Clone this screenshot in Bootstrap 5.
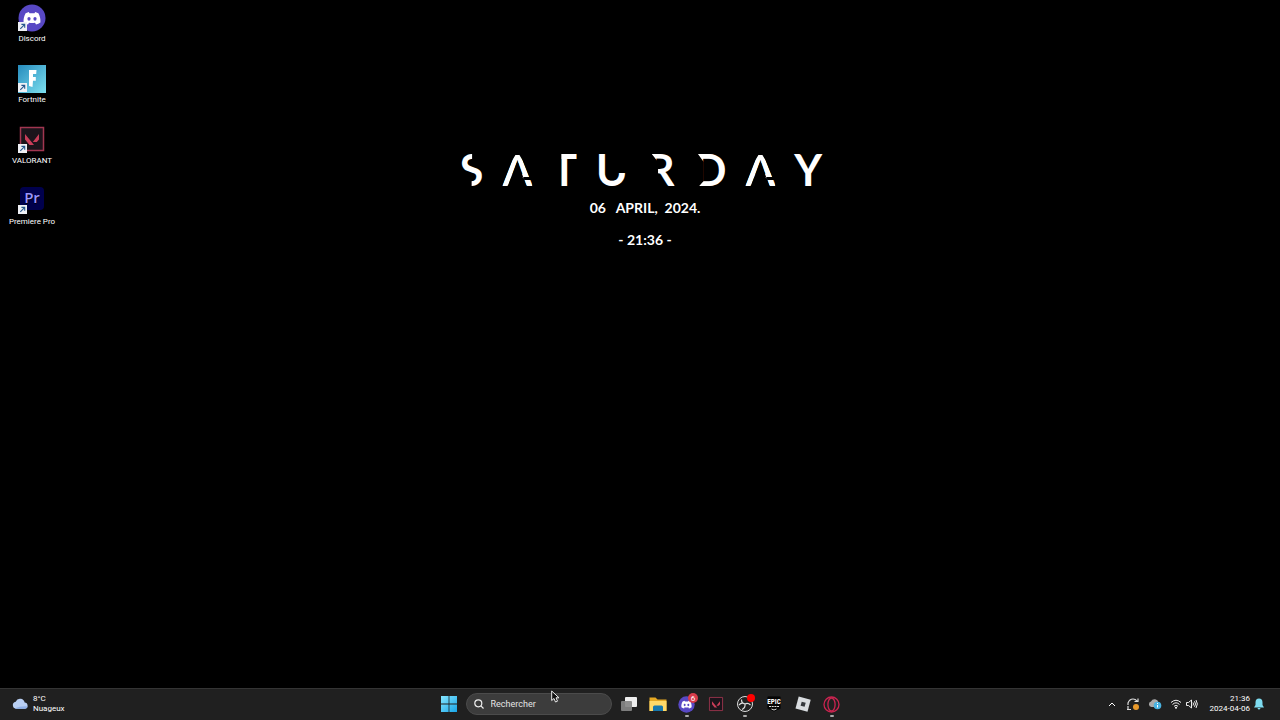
<!DOCTYPE html>
<html lang="fr">
<head>
<meta charset="utf-8">
<meta name="viewport" content="width=device-width, initial-scale=1">
<title>Bureau</title>
<link href="https://cdn.jsdelivr.net/npm/bootstrap@5.3.0/dist/css/bootstrap.min.css" rel="stylesheet">
<style>
  body { background: #000; color: #fff; font-family: Roboto, "Noto Sans", sans-serif; font-size: 8px; line-height: 10px; }
  button { background: none; border: 0; padding: 0; color: inherit; font: inherit; }
  svg { display: block; }
  .shortcuts { width: 64px; padding-top: 4px; }
  .shortcut { height: 61px; width: 64px; text-shadow: 0 1px 1px #000; }
  .shortcut svg { margin-bottom: 2px; }
  .clock { padding: 148px 0 0 10px; margin-right: 64px; font-family: Lato, sans-serif; font-weight: 700; font-size: 14px; line-height: 32px; }
  .clock h1 { font-size: 43px; line-height: 44px; font-weight: 700; gap: 19px; padding-right: 8px; }
  .clock p { white-space: pre; }
  /* stencil cuts in the letters of the day name */
  .cut-s { clip-path: polygon(0 0, 52% 0, 52% 18px, 100% 18px, 100% 100%, 50% 100%, 50% 28px, 0 28px); }
  .cut-a { clip-path: polygon(0 37px, 10px 12px, 13px 7px, 17px 7px, 20px 12px, 27px 29px, 20px 29px, 22px 32px, 100% 32px, 100% 100%, 26px 100%, 15px 13px, 3px 100%, 0 100%); }
  .cut-t { clip-path: polygon(39% 0, 100% 0, 100% 100%, 39% 100%); }
  .cut-u { clip-path: polygon(0 0, 50% 0, 50% 25px, 100% 25px, 100% 100%, 0 100%); }
  .cut-r { clip-path: polygon(0 0, 100% 0, 100% 100%, 11px 100%, 11px 14px); }
  .cut-d { clip-path: polygon(0 0, 100% 0, 100% 100%, 0 100%, 10px 33px, 10px 14px); }
  .taskbar { background: #202020; border-top: 1px solid #343434; height: 32px; padding-bottom: 1px; }
  .side { flex: 1 1 0; }
  .apps { gap: 11px; }
  .app { width: 18px; height: 30px; position: relative; display: flex; align-items: center; justify-content: center; }
  .running::after { content: ""; position: absolute; bottom: 2px; left: 7px; width: 4px; height: 2px; border-radius: 1px; background: #aaa; }
  .search { width: 146px; height: 22px; border-radius: 11px; background: #3c3c3c; border: 1px solid #4b4b4b; padding: 0 7px; gap: 7px; }
  .search input { background: none; border: 0; outline: 0; padding: 0; min-width: 0; width: 100%; font-size: 9px; color: #fff; }
  .search input::placeholder { color: #e4e4e4; opacity: 1; }
  .pointer { position: absolute; left: 551px; top: 690px; pointer-events: none; }
</style>
</head>
<body>
<svg width="0" height="0" class="position-absolute" aria-hidden="true">
  <defs>
    <symbol id="discord" viewBox="0 0 28 28">
      <circle cx="14" cy="14" r="13.5" fill="#5848c4"/>
      <path fill="#fff" d="M10.8 8 7.6 9.2C6 12 5.3 15 5.6 18.4q2 1.6 4.4 2.1l1-1.8q3 .8 6 0l1 1.8q2.4-.5 4.4-2.1c.3-3.4-.4-6.4-2-9.2L17.2 8l-.7 1.2h-5z"/>
      <ellipse cx="11" cy="14.8" rx="1.6" ry="1.9" fill="#5848c4"/><ellipse cx="17" cy="14.8" rx="1.6" ry="1.9" fill="#5848c4"/>
    </symbol>
    <symbol id="valorant" viewBox="0 0 28 28">
      <path fill="#1b141b" stroke="#a13650" stroke-width="1.5" d="M2.5 2.5h23v23h-23z"/>
      <path fill="#c93d59" d="m7 9 9 11h-4.500L7 14.500zM21 9v5.500L18.800 17h-4z"/>
    </symbol>
    <symbol id="arrow" viewBox="0 0 10 10">
      <path fill="#eef0f5" d="M0 0h9v9H0z"/><path fill="none" stroke="#26578c" stroke-width="1.1" d="M2.300 6.800 6.500 2.600M3.400 2.400h3.300v3.300"/>
    </symbol>
  </defs>
</svg>

<div class="d-flex flex-column min-vh-100">
  <main class="flex-grow-1 d-flex">
    <nav class="shortcuts d-flex flex-column" aria-label="Bureau">
      <button class="shortcut d-flex flex-column align-items-center">
        <svg width="28" height="28"><use href="#discord" width="28" height="28"/><use href="#arrow" y="18" width="10" height="10"/></svg>
        <span>Discord</span>
      </button>
      <button class="shortcut d-flex flex-column align-items-center">
        <svg width="28" height="28" viewBox="0 0 28 28"><defs><linearGradient id="sky" x2="1" y2="1"><stop stop-color="#268bbd"/><stop offset="1" stop-color="#7de0ef"/></linearGradient></defs><path fill="url(#sky)" d="M0 0h28v28H0z"/><path fill="#fff" d="M11 5h7.500l-.3 4H15v3h2.800v3.800H15L14.500 22 11 21z"/><use href="#arrow" y="18" width="10" height="10"/></svg>
        <span>Fortnite</span>
      </button>
      <button class="shortcut d-flex flex-column align-items-center">
        <svg width="28" height="28"><use href="#valorant" y="-1" width="28" height="28"/><use href="#arrow" y="18" width="10" height="10"/></svg>
        <span>VALORANT</span>
      </button>
      <button class="shortcut d-flex flex-column align-items-center">
        <svg width="28" height="28" viewBox="0 0 28 28"><rect x="2" y="0" width="24" height="23" rx="4" fill="#00004c"/><text x="14" y="16" text-anchor="middle" font-family="Open Sans, sans-serif" font-weight="600" font-size="15" fill="#9a94ff">Pr</text><use href="#arrow" y="18" width="10" height="10"/></svg>
        <span>Premiere Pro</span>
      </button>
    </nav>
    <section class="clock flex-grow-1 text-center">
      <h1 class="d-flex justify-content-center mb-0"><span class="cut-s">S</span><span class="cut-a">A</span><span class="cut-t">T</span><span class="cut-u">U</span><span class="cut-r">R</span><span class="cut-d">D</span><span class="cut-a">A</span><span>Y</span></h1>
      <p class="mb-0">06   APRIL,  2024.</p>
      <p class="mb-0">- 21:36 -</p>
    </section>
  </main>

  <footer class="taskbar d-flex align-items-center">
    <div class="side d-flex">
      <button class="d-flex align-items-center text-start gap-1 ms-2 ps-1">
        <svg width="17" height="13" viewBox="0 0 18 13"><path fill="#b9cff3" d="M4.300 11a3.800 3.800 0 0 1-.4-7.500 5 5 0 0 1 9.500 1A3.300 3.300 0 0 1 14 11z"/><path fill="#8fafe6" d="M3 10.500q6-2.500 13.500-2-.7 2.500-3 2.500H4z"/></svg>
        <span>8°C<br>Nuageux</span>
      </button>
    </div>
    <div class="d-flex align-items-center gap-2">
      <button class="app" aria-label="Démarrer"><svg width="16" height="16" viewBox="0 0 16 16"><defs><linearGradient id="win" x2="1" y2="1"><stop stop-color="#86e6ff"/><stop offset="1" stop-color="#18a5e8"/></linearGradient></defs><path fill="url(#win)" d="M0 0h7.600v7.600H0zM8.400 0H16v7.600H8.400zM0 8.400h7.600V16H0zM8.400 8.400H16V16H8.400z"/></svg></button>
      <label class="search d-flex align-items-center">
        <svg class="flex-shrink-0" width="10" height="10" viewBox="0 0 10 10" fill="none" stroke="#eee" stroke-width="1.2"><circle cx="4.3" cy="4.3" r="3.5"/><path d="m6.900 6.900 2.600 2.600"/></svg>
        <input type="text" placeholder="Rechercher" aria-label="Rechercher">
      </label>
      <div class="apps d-flex align-items-center">
      <button class="app" aria-label="Vue des tâches"><svg class="flex-shrink-0" width="18" height="16" viewBox="0 0 18 16"><rect x="5" y="1" width="12" height="10" rx="1" fill="#eee"/><rect x="1" y="5" width="11" height="10" rx="1" fill="#858585" opacity=".92"/></svg></button>
      <button class="app" aria-label="Explorateur"><svg width="18" height="16" viewBox="0 0 18 16"><path fill="#e5a823" d="M.5 1.500h6l2 2h9V15H.5z"/><path fill="#ffd969" d="M.5 5h17v10H.5z"/><path fill="#1878ad" d="M4 15v-4q0-1.500 1.500-1.500h7q1.500 0 1.500 1.500v4z"/></svg></button>
      <button class="app running" aria-label="Discord"><svg class="flex-shrink-0" width="22" height="22" viewBox="0 0 22 22"><use href="#discord" x="2" y="3" width="17" height="17"/><circle cx="17" cy="5" r="5" fill="#d83c4b"/><text x="17" y="8" text-anchor="middle" font-size="8" fill="#fff">6</text></svg></button>
      <button class="app" aria-label="VALORANT"><svg width="16" height="16"><use href="#valorant" width="16" height="16"/></svg></button>
      <button class="app running" aria-label="OBS"><svg class="flex-shrink-0" width="22" height="22" viewBox="0 0 22 22"><circle cx="11" cy="11" r="7.5" fill="#222" stroke="#ddd"/><path fill="none" stroke="#ddd" stroke-width="1.2" d="M7.500 6.500q0 4 3.500 4.500 3-1.500 5.500 1M11 11q.5 4-3 5.500M11 11Q7.500 9 5 12"/><circle cx="17" cy="5" r="4" fill="#f00"/></svg></button>
      <button class="app" aria-label="Epic Games"><svg width="14" height="16" viewBox="0 0 14 16"><path fill="#050505" stroke="#333" stroke-width=".5" d="M0 1q0-1 1-1h12q1 0 1 1v12l-7 3-7-3z"/><text x="7" y="8" text-anchor="middle" font-family="Roboto Condensed, Roboto, sans-serif" font-weight="700" font-size="7" fill="#fff">EPIC</text><path stroke="#ddd" stroke-dasharray="2 .7" d="M2 10.500h10"/><path fill="none" stroke="#ddd" d="m4.500 13 2.500 1 2.500-1"/></svg></button>
      <button class="app" aria-label="Roblox"><svg width="16" height="16" viewBox="0 0 16 16"><path fill="#d9dde0" d="m3.700.5 12 3.200-3.200 12-12-3.200z"/><path fill="#34383c" d="m6.700 5.700 4 1.100-1.100 4-4-1.100z"/></svg></button>
      <button class="app running" aria-label="Opera GX"><svg width="17" height="17" viewBox="0 0 17 17" fill="none" stroke="#cb2450" stroke-width="1.3"><circle cx="8.5" cy="8.5" r="7.5"/><ellipse cx="8.5" cy="8.5" rx="3.6" ry="6.5"/></svg></button>
      </div>
    </div>
    <div class="side d-flex align-items-center justify-content-end">
      <div class="d-flex align-items-center gap-2">
        <button aria-label="Icônes masquées"><svg width="12" height="12" viewBox="0 0 12 12"><path fill="none" stroke="#fff" d="m3 8 3-3 3 3"/></svg></button>
        <button aria-label="Mise à jour"><svg width="14" height="14" viewBox="0 0 14 14"><path fill="none" stroke="#ddd" stroke-width="1.2" d="M2 8V6q1.500-4 5-4 2.500 0 4 2M12 1.500v3H8.500M2 13V9M1 12.500h4"/><circle cx="10" cy="10" r="3" fill="#e8992b"/></svg></button>
        <button aria-label="OneDrive"><svg width="14" height="12" viewBox="0 0 14 12"><path fill="#aaa" d="M3.500 9A2.800 2.800 0 0 1 3 3.500a4 4 0 0 1 7.500 1L11 9z"/><circle cx="9.5" cy="7.5" r="3.8" fill="#49b3e1"/><path stroke="#fff" d="M9.500 7v2.500M9.500 5v1"/></svg></button>
        <button class="d-flex align-items-center gap-1" aria-label="Réseau et volume">
          <svg width="12" height="12" viewBox="0 0 12 12"><g fill="none" stroke="#eee"><path d="M1 4.500q5-4.500 10 0M2.500 6.500q3.500-3.400 7 0M4 8.300q2-2 4 0"/></g><circle cx="6" cy="9.8" r="1" fill="#fff"/></svg>
          <svg width="12" height="12" viewBox="0 0 12 12" fill="none" stroke="#eee"><path d="M.5 4.500h2l3-2.500v8l-3-2.500h-2zM7 4.500q1 1.500 0 3M8.500 3.200q2 2.800 0 5.600M10 2q2.700 4 0 8"/></svg>
        </button>
      </div>
      <button class="d-flex align-items-center text-end gap-1 ms-2 ps-1 me-3">
        <span>21:36<br>2024-04-06</span>
        <svg width="10" height="12" viewBox="0 0 10 12"><path fill="#7edcf0" d="M5 .5q3.500 0 3.500 4v2.500L10 9.500H0L1.500 7V4.500q0-4 3.500-4M3.500 10h3q-.3 1.500-1.500 1.500T3.500 10"/></svg>
      </button>
    </div>
  </footer>
</div>
<svg class="pointer" width="9" height="13" viewBox="0 0 9 13" aria-hidden="true"><path fill="#111" stroke="#eee" d="M.7 1v9.500L3 8.500l1.500 3.500 2-.8L5 7.800h3z"/></svg>
<script src="https://cdn.jsdelivr.net/npm/bootstrap@5.3.0/dist/js/bootstrap.bundle.min.js"></script>
</body>
</html>
